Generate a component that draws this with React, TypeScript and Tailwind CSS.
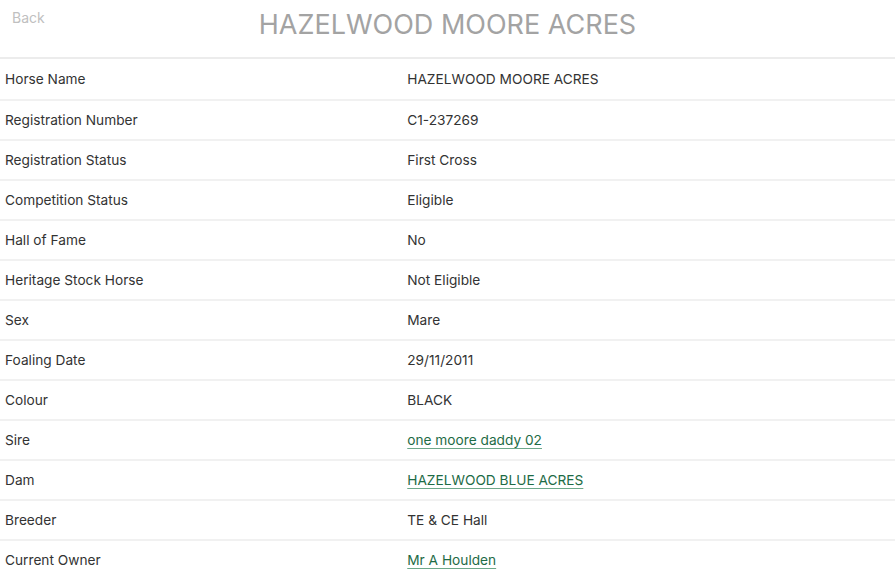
import React from 'react';

type Row = { label: string; value: string; link?: boolean };

const rows: Row[] = [
  { label: 'Horse Name', value: 'HAZELWOOD MOORE ACRES' },
  { label: 'Registration Number', value: 'C1-237269' },
  { label: 'Registration Status', value: 'First Cross' },
  { label: 'Competition Status', value: 'Eligible' },
  { label: 'Hall of Fame', value: 'No' },
  { label: 'Heritage Stock Horse', value: 'Not Eligible' },
  { label: 'Sex', value: 'Mare' },
  { label: 'Foaling Date', value: '29/11/2011' },
  { label: 'Colour', value: 'BLACK' },
  { label: 'Sire', value: 'one moore daddy 02', link: true },
  { label: 'Dam', value: 'HAZELWOOD BLUE ACRES', link: true },
  { label: 'Breeder', value: 'TE & CE Hall' },
  { label: 'Current Owner', value: 'Mr A Houlden', link: true },
];

export default function App() {
  return (
    <div className="h-[579px] w-full overflow-hidden bg-white font-['Inter',sans-serif]">
      <header className="relative flex h-[59px] items-center justify-center border-b-2 border-[#ececec]">
        <button className="absolute left-[12px] top-[7px] text-[14px] text-[#c0c0c0]">Back</button>
        <h1 className="-mt-[7px] text-[27px] font-normal text-[#a3a3a3]">
          HAZELWOOD MOORE ACRES
        </h1>
      </header>

      <div>
        {rows.map((row, i) => (
          <div
            key={row.label}
            className={
              i === 0
                ? 'grid h-[40px] grid-cols-[45%_55%] items-center px-[5px] text-[13.7px] text-[#333]'
                : 'grid h-[40px] grid-cols-[45%_55%] items-center border-t-2 border-[#f1f1f1] px-[5px] text-[13.7px] text-[#333]'
            }
          >
            <span>{row.label}</span>
            <span className="pl-[4px]">
              {row.link ? (
                <a
                  href="#"
                  className="text-[#1e6b46] underline decoration-[#6da88a] underline-offset-[3px]"
                >
                  {row.value}
                </a>
              ) : (
                row.value
              )}
            </span>
          </div>
        ))}
      </div>
    </div>
  );
}
